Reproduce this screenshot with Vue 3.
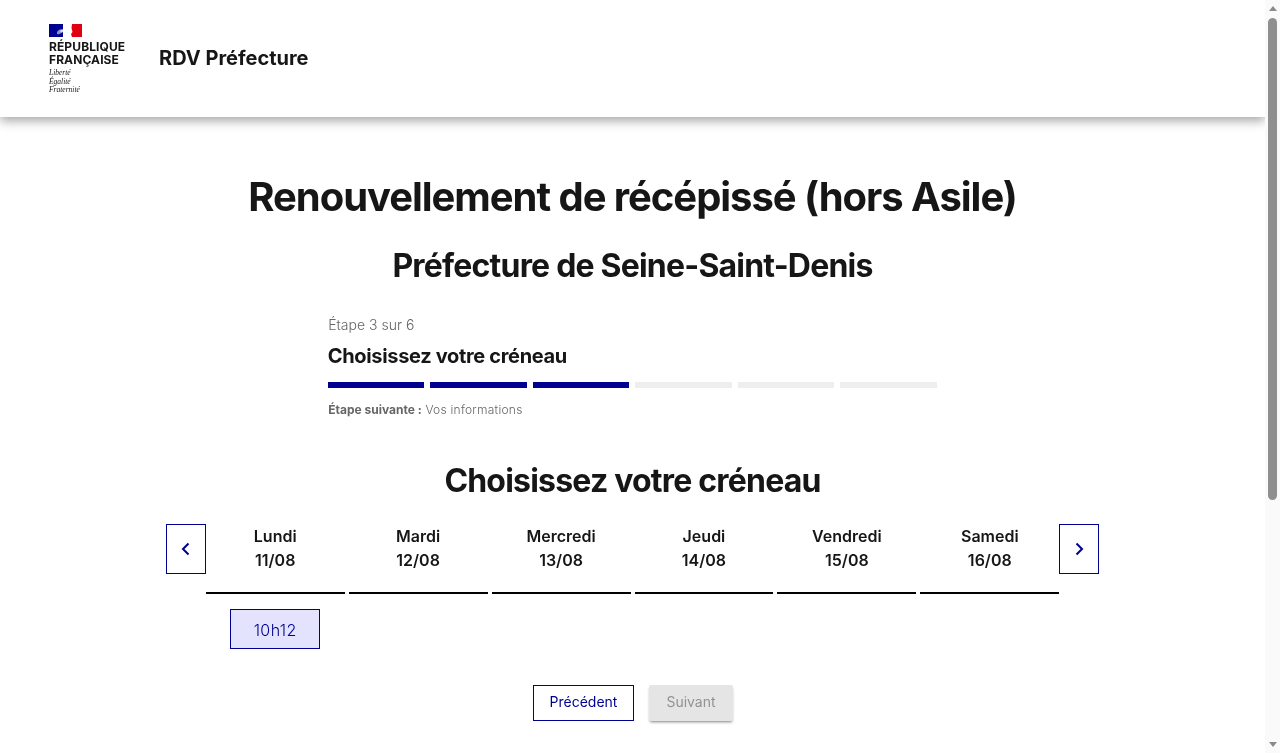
<script setup>
const days = [
  { name: 'Lundi', date: '11/08', slots: ['10h12'] },
  { name: 'Mardi', date: '12/08', slots: [] },
  { name: 'Mercredi', date: '13/08', slots: [] },
  { name: 'Jeudi', date: '14/08', slots: [] },
  { name: 'Vendredi', date: '15/08', slots: [] },
  { name: 'Samedi', date: '16/08', slots: [] }
]

const steps = [true, true, true, false, false, false]
</script>

<template>
  <div class="page">
    <div class="content">
      <header class="header">
        <div class="logo">
          <svg class="flag" width="33" height="13" viewBox="0 0 33 13">
            <rect width="33" height="13" fill="#fff" />
            <rect width="14" height="13" fill="#000091" />
            <rect x="22" width="11" height="13" fill="#e1000f" />
            <path d="M22 0 L23 0 L22.5 4 L23.5 8 L22 10 L23 13 L21 13 Z" fill="#fff" />
            <path d="M8 8 C9 6 11 5 14 5 L14 8 C12 10 11 9 10 10.5 L8 10 Z" fill="#8c8cd0" />
            <path d="M11 6.5 L14 6 L14 7.5 L12 8.5 Z" fill="#e4e4f6" />
          </svg>
          <div class="rf">RÉPUBLIQUE<br />FRANÇAISE</div>
          <div class="devise">Liberté<br />Égalité<br />Fraternité</div>
        </div>
        <div class="service">RDV Préfecture</div>
      </header>

      <main class="main">
        <h1>Renouvellement de récépissé (hors Asile)</h1>
        <h2>Préfecture de Seine-Saint-Denis</h2>

        <section class="stepper">
          <div class="step-state">Étape 3 sur 6</div>
          <div class="step-title">Choisissez votre créneau</div>
          <div class="step-bars">
            <span v-for="(done, i) in steps" :key="i" class="bar" :class="{ done }"></span>
          </div>
          <div class="step-next"><b>Étape suivante :</b> Vos informations</div>
        </section>

        <h2 class="slot-title">Choisissez votre créneau</h2>

        <div class="calendar">
          <button class="nav">
            <svg width="16" height="16" viewBox="0 0 16 16"><path d="M10.5 2.5 L5 8 L10.5 13.5" fill="none" stroke="#000091" stroke-width="2" /></svg>
          </button>
          <div class="days">
            <div v-for="day in days" :key="day.date" class="day">
              <div class="day-head">
                <div>{{ day.name }}</div>
                <div>{{ day.date }}</div>
              </div>
              <button v-for="slot in day.slots" :key="slot" class="slot">{{ slot }}</button>
            </div>
          </div>
          <button class="nav">
            <svg width="16" height="16" viewBox="0 0 16 16"><path d="M5.5 2.5 L11 8 L5.5 13.5" fill="none" stroke="#000091" stroke-width="2" /></svg>
          </button>
        </div>

        <div class="actions">
          <button class="btn prev">Précédent</button>
          <button class="btn next" disabled>Suivant</button>
        </div>
      </main>
    </div>

    <div class="scrollbar">
      <span class="arrow up"></span>
      <div class="track"><div class="thumb"></div></div>
      <span class="arrow down"></span>
    </div>
  </div>
</template>

<style>
html, body {
  margin: 0;
  height: 100%;
  overflow: hidden;
}
</style>

<style scoped>
.page {
  display: flex;
  height: 753px;
  overflow: hidden;
  font-family: Inter, Lato, sans-serif;
  color: #161616;
  background: #fff;
  will-change: transform;
}

.content {
  flex: 1;
  min-width: 0;
}

.header {
  height: 117px;
  box-sizing: border-box;
  padding: 24px 0 0 49px;
  display: flex;
  align-items: flex-start;
  box-shadow: 0 4px 10px rgba(0, 0, 0, 0.35);
}

.logo {
  width: 110px;
}

.flag {
  display: block;
}

.rf {
  margin-top: 3px;
  font-size: 12px;
  line-height: 13px;
  font-weight: 700;
  letter-spacing: 0.1px;
}

.devise {
  margin-top: 3px;
  font-family: "Liberation Serif", serif;
  font-style: italic;
  font-size: 7.5px;
  line-height: 8.5px;
}

.service {
  margin-top: 20px;
  font-size: 20px;
  line-height: 28px;
  font-weight: 700;
}

.main {
  text-align: center;
}

h1 {
  margin: 56px 0 0;
  font-size: 40px;
  line-height: 48px;
  font-weight: 700;
  letter-spacing: -1.05px;
}

h2 {
  margin: 25px 0 0;
  font-size: 32px;
  line-height: 40px;
  font-weight: 700;
  letter-spacing: -0.8px;
}

.stepper {
  width: 609px;
  margin: 27px 0 0 327.75px;
  text-align: left;
}

.step-state {
  padding-left: 0.5px;
  font-size: 14px;
  line-height: 24px;
  font-weight: 300;
  color: #666;
}

.step-title {
  margin-top: 5px;
  font-size: 20px;
  line-height: 28px;
  font-weight: 700;
  letter-spacing: -0.33px;
}

.step-bars {
  display: flex;
  gap: 6px;
  margin-top: 12px;
}

.bar {
  flex: 1;
  height: 6px;
  background: #eee;
}

.bar.done {
  background: #000091;
}

.step-next {
  margin-top: 12px;
  padding-left: 0.5px;
  font-size: 12px;
  line-height: 20px;
  font-weight: 300;
  letter-spacing: 0.25px;
  color: #666;
}

.step-next b {
  font-weight: 700;
  letter-spacing: 0;
}

.slot-title {
  margin-top: 41px;
}

.calendar {
  display: flex;
  align-items: flex-start;
  width: 933.5px;
  margin: 23px auto 0;
}

.nav {
  width: 40px;
  height: 50px;
  flex-shrink: 0;
  padding: 0;
  display: flex;
  align-items: center;
  justify-content: center;
  background: #fff;
  border: 1px solid #000091;
}

.days {
  flex: 1;
  display: grid;
  grid-template-columns: repeat(6, 1fr);
  gap: 4px;
}

.day {
  display: flex;
  flex-direction: column;
  align-items: center;
}

.day-head {
  width: 100%;
  height: 70px;
  box-sizing: border-box;
  border-bottom: 2px solid #000;
  font-size: 16px;
  line-height: 24px;
  font-weight: 600;
}

.slot {
  width: 90px;
  height: 40px;
  margin-top: 15px;
  padding: 2px 0 0;
  font-family: inherit;
  font-size: 16px;
  font-weight: 300;
  letter-spacing: 0.4px;
  color: #000091;
  background: #e3e3fd;
  border: 1px solid #000091;
}

.actions {
  display: flex;
  justify-content: center;
  gap: 15px;
  padding-left: 1px;
  margin-top: 36px;
}

.btn {
  height: 36px;
  padding: 0 0 4px;
  font-family: inherit;
  font-size: 14px;
}

.prev {
  width: 101px;
  color: #000091;
  background: #fff;
  border: 1px solid #000091;
}

.next {
  width: 84px;
  color: #929292;
  background: #e5e5e5;
  border: none;
  border-radius: 2px;
  box-shadow: 0 2px 3px -1px rgba(0, 0, 0, 0.5);
}

.scrollbar {
  width: 15px;
  flex-shrink: 0;
  display: flex;
  flex-direction: column;
  align-items: center;
  background: #fafafa;
}

.arrow {
  flex-shrink: 0;
  width: 0;
  height: 0;
  border-left: 4.5px solid transparent;
  border-right: 4.5px solid transparent;
}

.arrow.up {
  margin-top: 6px;
  border-bottom: 5px solid #8a8a8a;
}

.arrow.down {
  margin-bottom: 6px;
  border-top: 5px solid #8a8a8a;
}

.track {
  flex: 1;
  width: 100%;
  box-sizing: border-box;
  padding: 7px 3px 0;
}

.thumb {
  height: 482px;
  background: #8f8f8f;
  border-radius: 5px;
}
</style>
